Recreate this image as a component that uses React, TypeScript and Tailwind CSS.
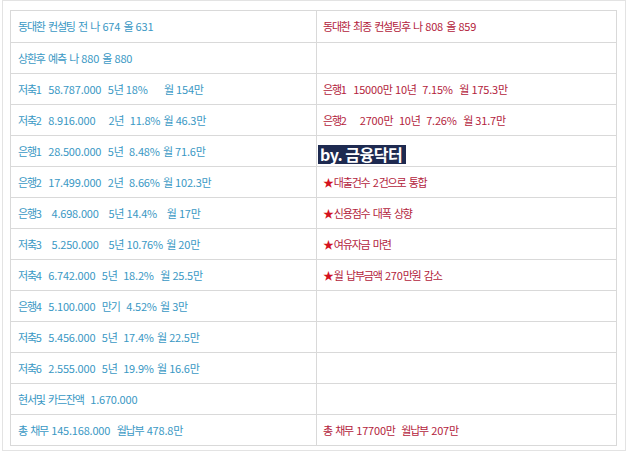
import React from "react";

const rows: [string, string][] = [
  ["동대환 컨설팅 전 나 674 올 631", "동대환 최종 컨설팅후 나 808 올 859"],
  ["상환후 예측 나 880 올 880", ""],
  ["저축1  58.787.000  5년 18%     월 154만", "은행1  15000만 10년  7.15%  월 175.3만"],
  ["저축2  8.916.000    2년  11.8% 월 46.3만", "은행2    2700만  10년  7.26%  월 31.7만"],
  ["은행1  28.500.000  5년  8.48% 월 71.6만", ""],
  ["은행2  17.499.000  2년  8.66% 월 102.3만", "★대출건수 2건으로 통합"],
  ["은행3   4.698.000   5년 14.4%   월 17만", "★신용점수 대폭 상향"],
  ["저축3   5.250.000   5년 10.76% 월 20만", "★여유자금 마련"],
  ["저축4  6.742.000  5년  18.2%  월 25.5만", "★월 납부금액 270만원 감소"],
  ["은행4  5.100.000  만기  4.52% 월 3만", ""],
  ["저축5  5.456.000  5년  17.4% 월 22.5만", ""],
  ["저축6  2.555.000  5년  19.9% 월 16.6만", ""],
  ["현서및 카드잔액  1.670.000", ""],
  ["총 채무 145.168.000  월납부 478.8만", "총 채무 17700만  월납부 207만"],
];

// hangul runs get tighter tracking than digits, closer to the original narrow font
const Line = ({ text }: { text: string }) => {
  const parts = text.split(/([가-힣]+)/);
  return (
    <span className="tracking-[-0.2px] [word-spacing:1px]">
      {parts.map((p, j) => {
        if (p === "") return null;
        if (/[가-힣]/.test(p))
          return (
            <span key={j} className="tracking-[-1.2px]">
              {p}
            </span>
          );
        if (p.startsWith("★"))
          return (
            <span key={j}>
              <span className="text-[#d4121f]">★</span>
              {p.slice(1)}
            </span>
          );
        return <span key={j}>{p}</span>;
      })}
    </span>
  );
};

const App = () => {
  return (
    <div className="w-[628px] h-[454px] bg-white font-['Noto_Sans_CJK_KR',sans-serif]">
      <div className="ml-[2px] w-[624px] h-[451px] border border-[#e3e3e3] pt-[9px] pl-[7px]">
        <div className="w-[607px] border border-[#d9d9d9]">
          {rows.map(([left, right], i) => (
            <div
              key={i}
              className={`flex h-[31px] ${i > 0 ? "border-t border-[#d9d9d9]" : ""}`}
            >
              <div className="w-[306px] flex items-center pl-[7px] border-r border-[#d9d9d9] text-[11px] text-[#3a98c4] whitespace-pre">
                <Line text={left} />
              </div>
              <div className="relative flex-1 flex items-center pl-[6px] text-[11px] text-[#b3233c] whitespace-pre">
                <Line text={right} />
                {i === 4 && (
                  <div className="absolute left-[1px] top-[9px] h-[19px] w-[88px] bg-[#1e2a50] text-white text-[16px] font-bold leading-[19px] pl-[2px] tracking-[-0.5px]">
                    by. 금융닥터
                  </div>
                )}
              </div>
            </div>
          ))}
        </div>
      </div>
    </div>
  );
};

export default App;
